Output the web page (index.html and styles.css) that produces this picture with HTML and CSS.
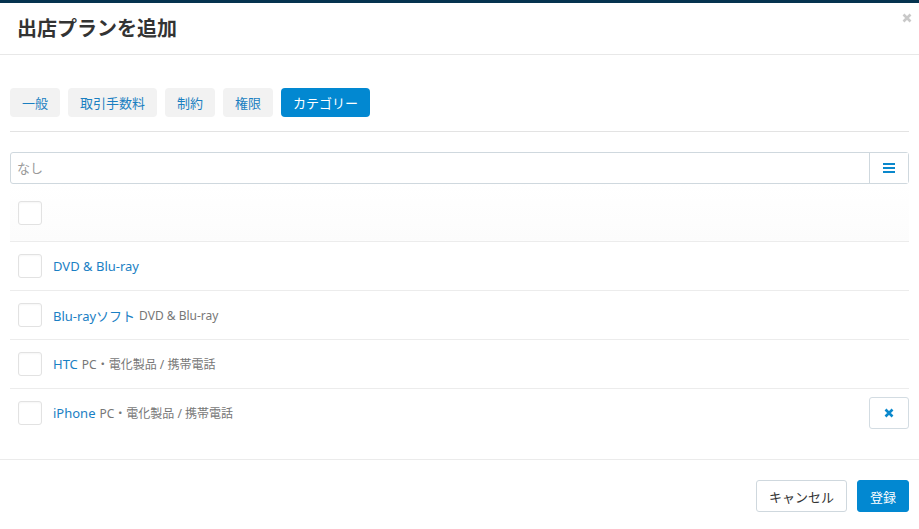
FILE: index.html
```html
<!DOCTYPE html>
<html lang="ja">
<head>
  <meta charset="UTF-8">
  <meta name="viewport" content="width=device-width, initial-scale=1.0">
  <title>出店プランを追加</title>
  <link rel="stylesheet" href="styles.css">
</head>
<body>
  <div class="topbar"></div>
  <div class="header">
    <h1>出店プランを追加</h1>
    <span class="close">
      <svg width="10" height="10" viewBox="0 0 10 10"><path d="M1.5 1.5l7 7M8.5 1.5l-7 7" stroke="#c9c9c9" stroke-width="2.6"/></svg>
    </span>
  </div>

  <div class="content">
    <div class="tabs">
      <button class="tab">一般</button>
      <button class="tab">取引手数料</button>
      <button class="tab">制約</button>
      <button class="tab">権限</button>
      <button class="tab active">カテゴリー</button>
    </div>

    <div class="search">
      <input type="text" placeholder="なし">
      <button class="menu-btn">
        <svg width="12" height="12" viewBox="0 0 12 12"><path d="M0 2h12M0 6h12M0 10h12" stroke="#0a88cc" stroke-width="2"/></svg>
      </button>
    </div>

    <ul class="list">
      <li class="row first"><span class="check"></span></li>
      <li class="row"><span class="check"></span><a class="name">DVD &amp; Blu-ray</a></li>
      <li class="row"><span class="check"></span><a class="name">Blu-rayソフト</a><span class="sub">DVD &amp; Blu-ray</span></li>
      <li class="row"><span class="check"></span><a class="name">HTC</a><span class="sub">PC・電化製品 / 携帯電話</span></li>
      <li class="row last"><span class="check"></span><a class="name">iPhone</a><span class="sub">PC・電化製品 / 携帯電話</span>
        <button class="remove">
          <svg width="10" height="10" viewBox="0 0 10 10"><path d="M1.5 1.5l7 7M8.5 1.5l-7 7" stroke="#0a88cc" stroke-width="2.6"/></svg>
        </button>
      </li>
    </ul>
  </div>

  <div class="footer">
    <button class="btn cancel">キャンセル</button>
    <button class="btn primary">登録</button>
  </div>
</body>
</html>
```

FILE: styles.css
```css
*{
  box-sizing: border-box;
  font-family: "Noto Sans", "Noto Sans CJK JP", sans-serif;
}
body{
  margin: 0;
  background: #fff;
  color: #333;
  width: 919px;
  height: 529px;
  overflow: hidden;
}
button{
  font-size: 13px;
  cursor: pointer;
}
.topbar{
  height: 3px;
  background: #05334f;
}
.header{
  position: relative;
  height: 52px;
  padding: 0 17px;
  display: flex;
  align-items: center;
  border-bottom: 1px solid #e8e8e8;
}
.header h1{
  margin: 0 0 2px;
  font-size: 20px;
  font-weight: bold;
  color: #333;
}
.close{
  position: absolute;
  right: 7px;
  top: 10px;
  line-height: 0;
}

.content{
  padding: 33px 10px 0;
}
.tabs{
  display: flex;
  gap: 8px;
  padding-bottom: 14px;
  border-bottom: 1px solid #e3e3e3;
}
.tab{
  height: 29px;
  padding: 0 12px;
  border: none;
  border-radius: 4px;
  background: #f2f2f2;
  color: #1a7fc1;
}
.tab.active{
  background: #0288d1;
  color: #fff;
}

.search{
  display: flex;
  margin-top: 20px;
  height: 32px;
  border: 1px solid #cfd8de;
  border-radius: 3px;
}
.search input{
  flex: 1;
  border: none;
  outline: none;
  padding: 0 6px;
  font-size: 13px;
  background: transparent;
}
.search input::placeholder{
  color: #999;
}
.menu-btn{
  width: 39px;
  border: none;
  border-left: 1px solid #cfd8de;
  background: #fff;
  line-height: 0;
}

.list{
  list-style: none;
  margin: 0;
  padding: 0;
}
.row{
  display: flex;
  align-items: center;
  height: 49px;
  padding: 0 8px;
  border-bottom: 1px solid #ececec;
}
.row.first{
  height: 58px;
  background: linear-gradient(#fff, #fcfcfc);
}
.row.last{
  border-bottom: none;
  height: 48px;
}
.check{
  width: 24px;
  height: 24px;
  border: 1px solid #e2e2e2;
  border-radius: 3px;
  background: #fff;
  box-shadow: inset 0 1px 2px rgba(0,0,0,0.04);
  margin-right: 11px;
}
.name{
  color: #1a80c4;
  font-size: 13px;
}
.sub{
  color: #777;
  font-size: 12px;
  margin-left: 4px;
}
.remove{
  margin-left: auto;
  margin-right: -8px;
  width: 40px;
  height: 32px;
  border: 1px solid #d3dce2;
  border-radius: 3px;
  background: #fff;
  line-height: 0;
}

.footer{
  margin-top: 22px;
  border-top: 1px solid #ebebeb;
  padding: 20px 10px 0;
  display: flex;
  justify-content: flex-end;
  gap: 10px;
}
.btn{
  height: 32px;
  padding: 0 12px;
  border-radius: 3px;
}
.cancel{
  background: #fff;
  border: 1px solid #cfd8de;
  color: #333;
}
.primary{
  background: #0288d1;
  border: 1px solid #0288d1;
  color: #fff;
}
```
